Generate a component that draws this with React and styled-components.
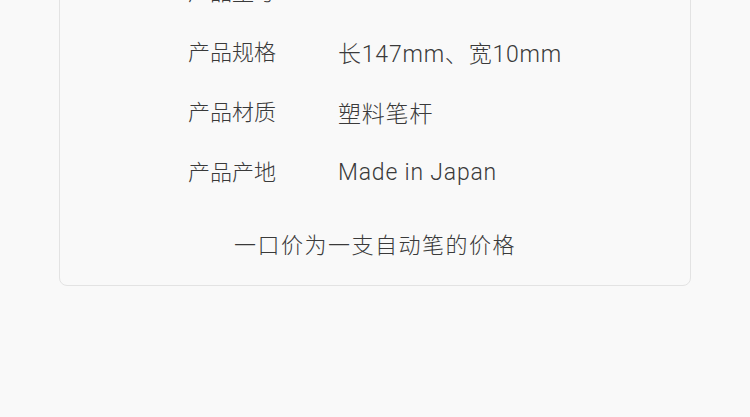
import React from "react";
import styled, { createGlobalStyle } from "styled-components";

const Global = createGlobalStyle`
  html, body {
    margin: 0;
    padding: 0;
    background: #f9f9f9;
    font-family: Roboto, "Noto Sans CJK SC", sans-serif;
    color: #3a3a3a;
  }
`;

const Page = styled.div`
  height: 417px;
  overflow: hidden;
`;

const Card = styled.section`
  box-sizing: border-box;
  width: 632px;
  margin: -41px 0 0 59px;
  border: 1px solid #e3e3e3;
  border-radius: 8px;
  background: #f9f9f9;
  padding-bottom: 19px;
`;

const Specs = styled.dl`
  margin: 0;
  padding: 0 0 0 128px;
`;

const Row = styled.div`
  display: flex;
  align-items: center;
  height: 60px;
  font-weight: 300;
`;

const Label = styled.dt`
  width: 150px;
  margin: 0;
  font-size: 22px;
`;

const Value = styled.dd`
  margin: 0;
  padding-top: 4px;
  font-size: 23px;
  letter-spacing: 0.8px;
`;

const Note = styled.p`
  margin: 26px 0 0;
  height: 40px;
  line-height: 40px;
  text-align: center;
  font-size: 22px;
  font-weight: 300;
  letter-spacing: 1.5px;
`;

const specs = [
  ["产品型号", "AE120N"],
  ["产品规格", "长147mm、宽10mm"],
  ["产品材质", "塑料笔杆"],
  ["产品产地", "Made in Japan"],
];

export default function App() {
  return (
    <Page>
      <Global />
      <Card>
        <Specs>
          {specs.map(([k, v]) => (
            <Row key={k}>
              <Label>{k}</Label>
              <Value>{v}</Value>
            </Row>
          ))}
        </Specs>
        <Note>一口价为一支自动笔的价格</Note>
      </Card>
    </Page>
  );
}
